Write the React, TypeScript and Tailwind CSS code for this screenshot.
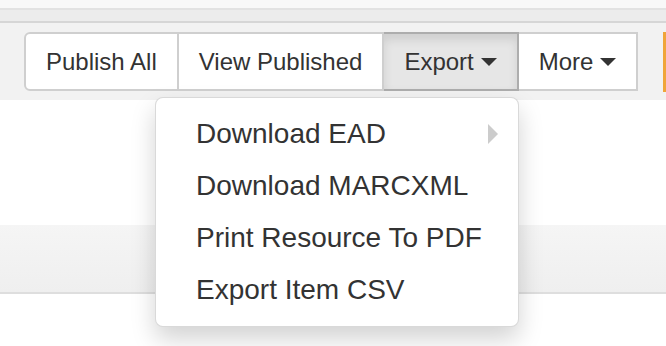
import React from 'react';

const font = { fontFamily: '"Liberation Sans", Helvetica, Arial, sans-serif' };

const Caret = () => (
  <span className="ml-[7px] inline-block w-0 h-0 border-l-[8px] border-r-[8px] border-t-[8px] border-l-transparent border-r-transparent border-t-[#333] align-middle" />
);

const menuItems = ['Download EAD', 'Download MARCXML', 'Print Resource To PDF', 'Export Item CSV'];

const App: React.FC = () => {
  return (
    <div className="relative w-[666px] h-[346px] overflow-hidden bg-white text-[#333]" style={font}>
      {/* top bars */}
      <div className="h-[10px] bg-[#f8f8f8] border-b-2 border-[#e2e2e2]" />
      <div className="h-[13px] bg-[#ececec] border-b-2 border-[#d6d6d6]" />

      {/* toolbar */}
      <div className="h-[77px] bg-[#f2f2f2] flex items-start pt-[9px] pl-[24px]">
        <div className="flex h-[59px] text-[24px] leading-none">
          <div className="flex items-center px-[20px] bg-white border-2 border-[#cfcfcf] rounded-l-[6px]">Publish All</div>
          <div className="flex items-center px-[20px] bg-white border-y-2 border-r-2 border-[#cfcfcf]">View Published</div>
          <div className="flex items-center px-[20px] bg-[#e6e6e6] border-y-2 border-r-2 border-[#adadad] shadow-[inset_0_6px_10px_rgba(0,0,0,0.1)]">
            Export<Caret />
          </div>
          <div className="flex items-center px-[20px] bg-white border-y-2 border-r-2 border-[#cfcfcf]">
            More<Caret />
          </div>
        </div>
        <div className="ml-auto w-[3px] h-[60px] bg-[#f0a53a]" />
      </div>

      {/* content */}
      <div className="h-[125px]" />
      <div className="h-[69px] bg-gradient-to-b from-[#f5f5f5] to-[#efefef] border-b-2 border-[#dedede]" />

      {/* dropdown menu */}
      <div className="absolute left-[155px] top-[97px] w-[364px] bg-white border border-[rgba(0,0,0,0.15)] rounded-[8px] shadow-[0_12px_24px_rgba(0,0,0,0.175)] py-[10px]">
        {menuItems.map((label, i) => (
          <div key={label} className="relative h-[52px] flex items-center pl-[40px] text-[28px] leading-none text-[#333]">
            {label}
            {i === 0 && (
              <span className="absolute right-[20px] top-[16px] w-0 h-0 border-t-[10px] border-b-[10px] border-l-[10px] border-t-transparent border-b-transparent border-l-[#ccc]" />
            )}
          </div>
        ))}
      </div>
    </div>
  );
};

export default App;
